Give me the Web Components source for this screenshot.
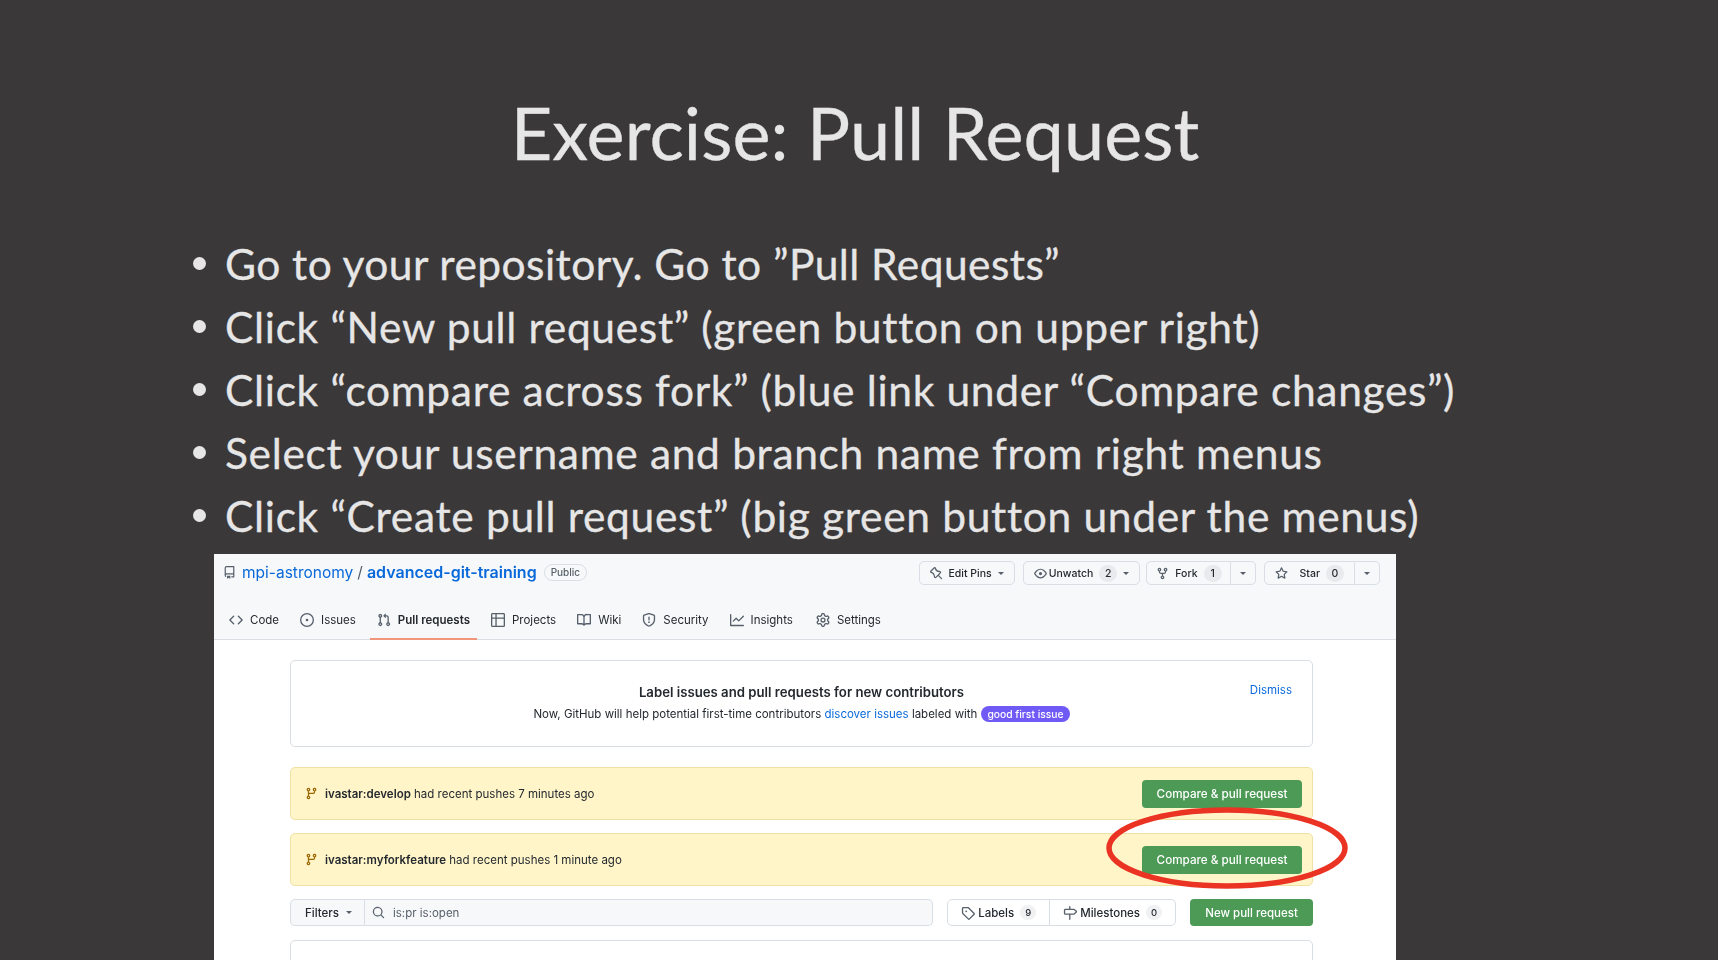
<!DOCTYPE html>
<html lang="en">
<head>
<meta charset="utf-8">
<title>Exercise: Pull Request</title>
<style>
  html, body { margin: 0; height: 100%; background: #3a3839; overflow: hidden; }
</style>
</head>
<body>
<slide-page>
  <slide-title slot="title">Exercise: Pull Request</slide-title>
  <slide-bullet style="letter-spacing:.45px">Go to your repository. Go to ”Pull Requests”</slide-bullet>
  <slide-bullet>Click “New pull request” (green button on upper right)</slide-bullet>
  <slide-bullet>Click “compare across fork” (blue link under “Compare changes”)</slide-bullet>
  <slide-bullet>Select your username and branch name from right menus</slide-bullet>
  <slide-bullet>Click “Create pull request” (big green button under the menus)</slide-bullet>
  <gh-panel slot="shot"></gh-panel>
</slide-page>

<script>
const ICONS = {
  repo: 'M2 2.5A2.5 2.5 0 014.5 0h8.75a.75.75 0 01.75.75v12.5a.75.75 0 01-.75.75h-2.5a.75.75 0 110-1.5h1.75v-2h-8a1 1 0 00-.714 1.7.75.75 0 01-1.072 1.05A2.495 2.495 0 012 11.5v-9zm10.5-1V9h-8c-.356 0-.694.074-1 .208V2.5a1 1 0 011-1h8zM5 12.25v3.25a.25.25 0 00.4.2l1.45-1.087a.25.25 0 01.3 0L8.6 15.7a.25.25 0 00.4-.2v-3.25a.25.25 0 00-.25-.25h-3.5a.25.25 0 00-.25.25z',
  code: 'M4.72 3.22a.75.75 0 011.06 1.06L2.06 8l3.72 3.72a.75.75 0 11-1.06 1.06L.47 8.53a.75.75 0 010-1.06l4.25-4.25zm6.56 0a.75.75 0 10-1.06 1.06L13.94 8l-3.72 3.72a.75.75 0 101.06 1.06l4.25-4.25a.75.75 0 000-1.06l-4.25-4.25z',
  issue: 'M8 9.5a1.5 1.5 0 100-3 1.5 1.5 0 000 3zM8 0a8 8 0 100 16A8 8 0 008 0zM1.5 8a6.5 6.5 0 1113 0 6.5 6.5 0 01-13 0z',
  pr: 'M7.177 3.073L9.573.677A.25.25 0 0110 .854v4.792a.25.25 0 01-.427.177L7.177 3.427a.25.25 0 010-.354zM3.75 2.5a.75.75 0 100 1.5.75.75 0 000-1.5zm-2.25.75a2.25 2.25 0 113 2.122v5.256a2.251 2.251 0 11-1.5 0V5.372A2.25 2.25 0 011.5 3.25zM11 2.5h-1V4h1a1 1 0 011 1v5.628a2.251 2.251 0 101.5 0V5A2.5 2.5 0 0011 2.5zm1 10.25a.75.75 0 111.5 0 .75.75 0 01-1.5 0zM3.75 12a.75.75 0 100 1.5.75.75 0 000-1.5z',
  table: 'M0 1.75C0 .784.784 0 1.75 0h12.5C15.216 0 16 .784 16 1.75v12.5A1.75 1.75 0 0114.25 16H1.75A1.75 1.75 0 010 14.25V1.75zM1.5 6.5v7.75c0 .138.112.25.25.25H5v-8H1.5zM5 5H1.5V1.75a.25.25 0 01.25-.25H5V5zm1.5 1.5v8h7.75a.25.25 0 00.25-.25V6.5h-8zm8-1.5h-8V1.5h7.75a.25.25 0 01.25.25V5z',
  book: 'M0 1.75A.75.75 0 01.75 1h4.253c1.227 0 2.317.59 3 1.501A3.744 3.744 0 0111.006 1h4.245a.75.75 0 01.75.75v10.5a.75.75 0 01-.75.75h-4.507a2.25 2.25 0 00-1.591.659l-.622.621a.75.75 0 01-1.06 0l-.622-.621A2.25 2.25 0 005.258 13H.75a.75.75 0 01-.75-.75V1.75zm8.755 3a2.25 2.25 0 012.25-2.25H14.5v9h-3.757c-.71 0-1.4.201-1.992.572l.004-7.322zm-1.504 7.324l.004-5.073-.002-2.253A2.25 2.25 0 005.003 2.5H1.5v9h3.757a3.75 3.75 0 011.994.574z',
  shield: 'M7.467.133a1.75 1.75 0 011.066 0l5.25 1.68A1.75 1.75 0 0115 3.48V7c0 1.566-.32 3.182-1.303 4.682-.983 1.498-2.585 2.813-5.032 3.855a1.7 1.7 0 01-1.33 0c-2.447-1.042-4.049-2.357-5.032-3.855C1.32 10.182 1 8.566 1 7V3.48a1.75 1.75 0 011.217-1.667l5.25-1.68zm.61 1.429a.25.25 0 00-.153 0l-5.25 1.68a.25.25 0 00-.174.238V7c0 1.358.275 2.666 1.057 3.86.784 1.194 2.121 2.34 4.366 3.297a.2.2 0 00.154 0c2.245-.956 3.582-2.104 4.366-3.298C13.225 9.666 13.5 8.36 13.5 7V3.48a.25.25 0 00-.174-.237l-5.25-1.68zM9 10.5a1 1 0 11-2 0 1 1 0 012 0zm-.25-5.75a.75.75 0 10-1.5 0v3a.75.75 0 001.5 0v-3z',
  graph: 'M1.5 1.75a.75.75 0 00-1.5 0v12.5c0 .414.336.75.75.75h14.5a.75.75 0 000-1.5H1.5V1.75zm14.28 2.53a.75.75 0 00-1.06-1.06L10 7.94 7.53 5.47a.75.75 0 00-1.06 0L3.22 8.72a.75.75 0 001.06 1.06L7 7.06l2.47 2.47a.75.75 0 001.06 0l5.25-5.25z',
  gear: 'M7.429 1.525a6.593 6.593 0 011.142 0c.036.003.108.036.137.146l.289 1.105c.147.56.55.967.997 1.189.174.086.341.183.501.29.417.278.97.423 1.53.27l1.102-.303c.11-.03.175.016.195.046.219.31.41.641.573.989.014.031.022.11-.059.19l-.815.806c-.411.406-.562.957-.53 1.456a4.588 4.588 0 010 .582c-.032.499.119 1.05.53 1.456l.815.806c.08.08.073.159.059.19a6.494 6.494 0 01-.573.99c-.02.029-.086.074-.195.045l-1.103-.303c-.559-.153-1.112-.008-1.529.27-.16.107-.327.204-.5.29-.449.222-.851.628-.998 1.189l-.289 1.105c-.029.11-.101.143-.137.146a6.613 6.613 0 01-1.142 0c-.036-.003-.108-.037-.137-.146l-.289-1.105c-.147-.56-.55-.967-.997-1.189a4.502 4.502 0 01-.501-.29c-.417-.278-.97-.423-1.53-.27l-1.102.303c-.11.03-.175-.016-.195-.046a6.492 6.492 0 01-.573-.989c-.014-.031-.022-.11.059-.19l.815-.806c.411-.406.562-.957.53-1.456a4.587 4.587 0 010-.582c.032-.499-.119-1.05-.53-1.456l-.815-.806c-.08-.08-.073-.159-.059-.19a6.44 6.44 0 01.573-.99c.02-.029.086-.075.195-.045l1.103.303c.559.153 1.112.008 1.529-.27.16-.107.327-.204.5-.29.449-.222.851-.628.998-1.189l.289-1.105c.029-.11.101-.143.137-.146zM8 0c-.236 0-.47.01-.701.03-.743.065-1.29.615-1.458 1.261l-.29 1.106c-.017.066-.078.158-.211.224a5.994 5.994 0 00-.668.386c-.123.082-.233.09-.3.071L3.27 2.776c-.644-.177-1.392.02-1.82.63a7.977 7.977 0 00-.704 1.217c-.315.675-.111 1.422.363 1.891l.815.806c.05.048.098.147.088.294a6.084 6.084 0 000 .772c.01.147-.038.246-.088.294l-.815.806c-.474.469-.678 1.216-.363 1.891.2.428.436.835.704 1.218.428.609 1.176.806 1.82.63l1.103-.303c.066-.019.176-.011.299.071.213.143.436.272.668.386.133.066.194.158.212.224l.289 1.106c.169.646.715 1.196 1.458 1.26a8.094 8.094 0 001.402 0c.743-.064 1.29-.614 1.458-1.26l.29-1.106c.017-.066.078-.158.211-.224a5.98 5.98 0 00.668-.386c.123-.082.233-.09.3-.071l1.102.302c.644.177 1.392-.02 1.82-.63.268-.382.505-.789.704-1.217.315-.675.111-1.422-.364-1.891l-.814-.806c-.05-.048-.098-.147-.088-.294a6.1 6.1 0 000-.772c-.01-.147.039-.246.088-.294l.814-.806c.475-.469.679-1.216.364-1.891a7.992 7.992 0 00-.704-1.218c-.428-.609-1.176-.806-1.82-.63l-1.103.303c-.066.019-.176.011-.299-.071a5.991 5.991 0 00-.668-.386c-.133-.066-.194-.158-.212-.224L10.16 1.29C9.99.645 9.444.095 8.701.031A8.094 8.094 0 008 0zm1.5 8a1.5 1.5 0 11-3 0 1.5 1.5 0 013 0zM11 8a3 3 0 11-6 0 3 3 0 016 0z',
  pin: 'M4.456.734a1.75 1.75 0 012.826.504l.613 1.327a3.081 3.081 0 002.084 1.707l2.454.584c1.332.317 1.8 1.972.832 2.94L11.06 10l3.72 3.72a.75.75 0 11-1.061 1.06L10 11.06l-2.204 2.205c-.968.968-2.623.5-2.94-.832l-.584-2.454a3.081 3.081 0 00-1.707-2.084l-1.327-.613a1.75 1.75 0 01-.504-2.826L4.456.734zM5.92 1.866a.25.25 0 00-.404-.072L1.794 5.516a.25.25 0 00.072.404l1.328.613A4.582 4.582 0 015.73 9.63l.584 2.454a.25.25 0 00.42.12l5.47-5.47a.25.25 0 00-.12-.42L9.63 6.13a4.583 4.583 0 01-3.098-2.537L5.92 1.866z',
  eye: 'M1.679 7.932c.412-.621 1.242-1.75 2.366-2.717C5.175 4.242 6.527 3.5 8 3.5c1.473 0 2.824.742 3.955 1.715 1.124.967 1.954 2.096 2.366 2.717a.119.119 0 010 .136c-.412.621-1.242 1.75-2.366 2.717C10.825 11.758 9.473 12.5 8 12.5c-1.473 0-2.824-.742-3.955-1.715C2.92 9.818 2.09 8.69 1.679 8.068a.119.119 0 010-.136zM8 2c-1.981 0-3.67.992-4.933 2.078C1.797 5.169.88 6.423.43 7.1a1.619 1.619 0 000 1.798c.45.678 1.367 1.932 2.637 3.024C4.329 13.008 6.019 14 8 14c1.981 0 3.67-.992 4.933-2.078 1.27-1.091 2.187-2.345 2.637-3.023a1.619 1.619 0 000-1.798c-.45-.678-1.367-1.932-2.637-3.023C11.671 2.992 9.981 2 8 2zm0 8a2 2 0 100-4 2 2 0 000 4z',
  fork: 'M5 3.25a.75.75 0 11-1.5 0 .75.75 0 011.5 0zm0 2.122a2.25 2.25 0 10-1.5 0v.878A2.25 2.25 0 005.75 8.5h1.5v2.128a2.251 2.251 0 101.5 0V8.5h1.5a2.25 2.25 0 002.25-2.25v-.878a2.25 2.25 0 10-1.5 0v.878a.75.75 0 01-.75.75h-4.5A.75.75 0 015 6.25v-.878zm3.75 7.378a.75.75 0 11-1.5 0 .75.75 0 011.5 0zm3-8.75a.75.75 0 100-1.5.75.75 0 000 1.5z',
  star: 'M8 .25a.75.75 0 01.673.418l1.882 3.815 4.21.612a.75.75 0 01.416 1.279l-3.046 2.97.719 4.192a.75.75 0 01-1.088.791L8 12.347l-3.766 1.98a.75.75 0 01-1.088-.79l.72-4.194L.818 6.374a.75.75 0 01.416-1.28l4.21-.611L7.327.668A.75.75 0 018 .25zm0 2.445L6.615 5.5a.75.75 0 01-.564.41l-3.097.45 2.24 2.184a.75.75 0 01.216.664l-.528 3.084 2.769-1.456a.75.75 0 01.698 0l2.77 1.456-.53-3.084a.75.75 0 01.216-.664l2.24-2.183-3.096-.45a.75.75 0 01-.564-.41L8 2.694v.001z',
  branch: 'M11.75 2.5a.75.75 0 100 1.5.75.75 0 000-1.5zm-2.25.75a2.25 2.25 0 113 2.122V6A2.5 2.5 0 0110 8.5H6a1 1 0 00-1 1v1.128a2.251 2.251 0 11-1.5 0V5.372a2.25 2.25 0 111.5 0v1.836A2.492 2.492 0 016 7h4a1 1 0 001-1v-.628A2.25 2.25 0 019.5 3.25zM4.25 12a.75.75 0 100 1.5.75.75 0 000-1.5zM3.5 3.25a.75.75 0 111.5 0 .75.75 0 01-1.5 0z',
  search: 'M11.5 7a4.499 4.499 0 11-8.998 0A4.499 4.499 0 0111.5 7zm-.82 4.74a6 6 0 111.06-1.06l3.04 3.04a.75.75 0 11-1.06 1.06l-3.04-3.04z',
  tag: 'M2.5 7.775V2.75a.25.25 0 01.25-.25h5.025a.25.25 0 01.177.073l6.25 6.25a.25.25 0 010 .354l-5.025 5.025a.25.25 0 01-.354 0l-6.25-6.25a.25.25 0 01-.073-.177zm-1.5 0V2.75C1 1.784 1.784 1 2.75 1h5.025c.464 0 .91.184 1.238.513l6.25 6.25a1.75 1.75 0 010 2.474l-5.026 5.026a1.75 1.75 0 01-2.474 0l-6.25-6.25A1.75 1.75 0 011 7.775zM6 5a1 1 0 100 2 1 1 0 000-2z',
  milestone: 'M7.75 0a.75.75 0 01.75.75V3h3.634c.414 0 .814.147 1.13.414l2.07 1.75a1.75 1.75 0 010 2.672l-2.07 1.75a1.75 1.75 0 01-1.13.414H8.5v5.25a.75.75 0 11-1.5 0V10H2.75A1.75 1.75 0 011 8.25v-3.5C1 3.784 1.784 3 2.75 3H7V.75A.75.75 0 017.75 0zm0 8.5h4.384a.25.25 0 00.161-.06l2.07-1.75a.25.25 0 000-.38l-2.07-1.75a.25.25 0 00-.161-.06H2.75a.25.25 0 00-.25.25v3.5c0 .138.112.25.25.25h5z'
}

const define = (name, html) => customElements.define(name, class extends HTMLElement {
  constructor () {
    super()
    this.attachShadow({ mode: 'open' }).innerHTML = html
  }
})

/** Inline octicon, picked by its name attribute. */
customElements.define('gh-icon', class extends HTMLElement {
  constructor () {
    super()
    const size = this.getAttribute('size') || 14
    this.attachShadow({ mode: 'open' }).innerHTML = `
      <style>:host { display: inline-flex; flex: none; color: #57606a; }</style>
      <svg width="${size}" height="${size}" viewBox="0 0 16 16" fill="currentColor">
        <path fill-rule="evenodd" d="${ICONS[this.getAttribute('name')]}"/>
      </svg>`
  }
})

define('slide-page', `
  <style>
    :host {
      display: flex; flex-direction: column; height: 960px; overflow: hidden;
      background: #3a3839; color: #e7e6e6;
      font-family: Lato, "Open Sans", sans-serif;
      -webkit-text-stroke: 0.3px #e7e6e6;
    }
    .bullets { display: flex; flex-direction: column; padding: 0 0 0 193px; margin-top: 54px; }
    .shot { display: block; padding: 0 322px 0 214px; margin-top: 7px; -webkit-text-stroke: 0; }
  </style>
  <slot name="title"></slot>
  <div class="bullets"><slot></slot></div>
  <div class="shot"><slot name="shot"></slot></div>`)

define('slide-title', `
  <style>
    :host { display: block; padding: 86px 8px 0 0; text-align: center; font-size: 72px; line-height: 92px; letter-spacing: 0.05px; }
  </style>
  <slot></slot>`)

define('slide-bullet', `
  <style>
    :host { display: flex; align-items: center; height: 63px; font-size: 42.5px; letter-spacing: 0.67px; white-space: nowrap; }
    i { width: 13px; height: 13px; border-radius: 50%; background: currentColor; margin-right: 19px; flex: none; }
  </style>
  <i></i><span><slot></slot></span>`)

/* header button, with optional counter and caret in its slot */
define('gh-btn', `
  <style>
    :host {
      display: inline-flex; align-items: center; gap: 6px; height: 24px; box-sizing: border-box;
      padding: 0 10px; border: 1px solid #d8dee4; border-radius: 5px; background: #f6f8fa;
      font-size: 10.5px; font-weight: 500; color: #24292f; white-space: nowrap;
    }
  </style>
  <slot></slot>`)

define('gh-count', `
  <style>
    :host { display: inline-block; min-width: 18px; padding: 0 1px; box-sizing: border-box; line-height: 17px; border-radius: 9px; text-align: center; background: #e8eaed; font-size: 10.5px; color: #24292f; }
  </style>
  <slot></slot>`)

define('gh-caret', `
  <style>:host { display: inline-block; width: 0; height: 0; border: 3.5px solid transparent; border-top-color: #57606a; border-bottom: 0; }</style>`)

define('gh-tab', `
  <style>
    :host { display: inline-flex; align-items: center; gap: 7px; padding: 0 7px; height: 100%; box-sizing: border-box; font-size: 11.5px; color: #24292f; border-bottom: 2px solid transparent; }
    :host([active]) { font-weight: 600; border-bottom-color: #f0967a; }
  </style>
  <slot></slot>`)

define('gh-push', `
  <style>
    :host {
      display: flex; align-items: center; height: 53px; box-sizing: border-box; padding: 0 10px 0 14px;
      background: #fff5c9; border: 1px solid #efe1a4; border-radius: 5px; font-size: 11.5px; color: #24292f;
    }
    gh-icon { color: #9a6700; margin-right: 7px; }
    .msg { flex: 1; }
    b { font-weight: 600; }
    .go { display: inline-flex; align-items: center; justify-content: center; width: 160px; height: 28px; border-radius: 4px; background: #4c9a55; color: #fff; font-size: 11.7px; font-weight: 500; }
  </style>
  <gh-icon name="branch" size="13"></gh-icon>
  <span class="msg"><slot></slot></span>
  <span class="go">Compare &amp; pull request</span>`)

define('gh-banner', `
  <style>
    :host {
      display: flex; flex-direction: column; align-items: center; height: 87px; box-sizing: border-box; padding-top: 21px;
      position: relative; background: #fff; border: 1px solid #d8dee4; border-radius: 5px; font-size: 11.5px; color: #24292f;
    }
    h2 { margin: 0 0 3px; font-size: 13.2px; line-height: 20px; font-weight: 600; }
    p { margin: 0; display: flex; align-items: center; gap: 4px; line-height: 18px; }
    a { color: #0969da; text-decoration: none; }
    .label { background: #6f5af6; color: #fff; border-radius: 9px; padding: 0 6px; font-size: 10.3px; line-height: 16px; font-weight: 500; }
    .dismiss { position: absolute; right: 20px; top: 22px; }
  </style>
  <h2>Label issues and pull requests for new contributors</h2>
  <p><span>Now, GitHub will help potential first-time contributors <a>discover issues</a> labeled with</span><span class="label">good first issue</span></p>
  <a class="dismiss">Dismiss</a>`)

define('gh-toolbar', `
  <style>
    :host { display: flex; align-items: stretch; height: 27px; font-size: 11.5px; color: #24292f; }
    .filters { display: flex; align-items: center; gap: 7px; width: 75px; box-sizing: border-box; padding-left: 14px; background: #f6f8fa; border: 1px solid #d8dee4; border-radius: 5px 0 0 5px; font-weight: 500; }
    .search { display: flex; align-items: center; gap: 8px; flex: 1; padding-left: 7px; background: #f6f8fa; border: 1px solid #d8dee4; border-left: 0; border-radius: 0 5px 5px 0; color: #57606a; }
    .nav { display: flex; margin-left: 14px; border: 1px solid #d8dee4; border-radius: 5px; font-weight: 500; }
    .nav span { display: flex; align-items: center; gap: 3px; padding: 0 13px; }
    .nav span + span { border-left: 1px solid #d8dee4; }
    .new { display: flex; align-items: center; justify-content: center; width: 123px; margin-left: 14px; background: #4c9a55; color: #fff; font-weight: 500; border-radius: 4px; }
    gh-count { background: #f0f1f3; font-size: 9.5px; margin-left: 3px; min-width: 16px; line-height: 15px; }
  </style>
  <div class="filters">Filters <gh-caret></gh-caret></div>
  <div class="search"><gh-icon name="search" size="13"></gh-icon><span>is:pr is:open</span></div>
  <div class="nav">
    <span><gh-icon name="tag" size="14"></gh-icon>Labels <gh-count>9</gh-count></span>
    <span><gh-icon name="milestone" size="14"></gh-icon>Milestones <gh-count>0</gh-count></span>
  </div>
  <div class="new">New pull request</div>`)

define('gh-panel', `
  <style>
    :host { display: block; position: relative; width: 1182px; height: 410px; overflow: hidden; background: #fff; font-family: Inter, "Liberation Sans", sans-serif; filter: blur(0.4px); }
    header { background: #f6f8fa; height: 86px; box-sizing: border-box; border-bottom: 1px solid #d8dee4; display: flex; flex-direction: column; }
    .top { display: flex; align-items: center; height: 38px; padding: 0 16px 0 9px; }
    .repo { display: flex; align-items: center; gap: 6px; flex: 1; margin-top: -2px; font-size: 15.5px; color: #0969da; }
    .repo strong { font-weight: 600; font-size: 16px; }
    .repo i { font-style: normal; color: #57606a; margin: 0 -2px; }
    .pub { font-size: 10px; font-weight: 500; color: #57606a; border: 1px solid #d8dee4; border-radius: 9px; padding: 0 6px; line-height: 15px; margin-left: 1px; }
    .btns { display: flex; }
    .split { display: flex; }
    .split gh-btn:first-child { border-radius: 5px 0 0 5px; }
    .split gh-btn:last-child { border-radius: 0 5px 5px 0; border-left: 0; padding: 0 9px; }
    .watch { margin-left: 8px; }
    .fork { margin-left: 6px; }
    .fork gh-btn:first-child { padding: 0 8px 0 9px; }
    .star { margin-left: 8px; }
    .eye { margin-right: -4px; }
    .star gh-icon { margin-right: 6px; }
    nav { display: flex; gap: 7px; padding-left: 8px; flex: 1; align-items: stretch; margin-bottom: -1px; padding-top: 9px; }
    .last { margin-left: 2px; }
    main { display: flex; flex-direction: column; padding: 20px 83px 0 76px; }
    gh-banner { margin-bottom: 20px; }
    gh-push { margin-bottom: 13px; }
    gh-toolbar { margin-bottom: 14px; }
    .list { height: 60px; border: 1px solid #d8dee4; border-radius: 5px 5px 0 0; }
    b { font-weight: 600; }
    .ring { position: absolute; left: 887px; top: 249px; }
  </style>
  <header>
    <div class="top">
      <div class="repo"><gh-icon name="repo" size="13"></gh-icon><span>mpi-astronomy</span><i>/</i><strong>advanced-git-training</strong><span class="pub">Public</span></div>
      <div class="btns">
        <gh-btn><gh-icon name="pin" size="13"></gh-icon>Edit Pins <gh-caret></gh-caret></gh-btn>
        <gh-btn class="watch"><gh-icon class="eye" name="eye" size="13"></gh-icon>Unwatch <gh-count>2</gh-count><gh-caret></gh-caret></gh-btn>
        <div class="split fork">
          <gh-btn><gh-icon name="fork" size="13"></gh-icon>Fork <gh-count>1</gh-count></gh-btn>
          <gh-btn><gh-caret></gh-caret></gh-btn>
        </div>
        <div class="split star">
          <gh-btn><gh-icon name="star" size="13"></gh-icon>Star <gh-count>0</gh-count></gh-btn>
          <gh-btn><gh-caret></gh-caret></gh-btn>
        </div>
      </div>
    </div>
    <nav>
      <gh-tab><gh-icon name="code"></gh-icon>Code</gh-tab>
      <gh-tab><gh-icon name="issue"></gh-icon>Issues</gh-tab>
      <gh-tab active><gh-icon name="pr"></gh-icon>Pull requests</gh-tab>
      <gh-tab><gh-icon name="table"></gh-icon>Projects</gh-tab>
      <gh-tab><gh-icon name="book"></gh-icon>Wiki</gh-tab>
      <gh-tab><gh-icon name="shield"></gh-icon>Security</gh-tab>
      <gh-tab><gh-icon name="graph"></gh-icon>Insights</gh-tab>
      <gh-tab class="last"><gh-icon name="gear"></gh-icon>Settings</gh-tab>
    </nav>
  </header>
  <main>
    <gh-banner></gh-banner>
    <gh-push><b>ivastar:develop</b> had recent pushes 7 minutes ago</gh-push>
    <gh-push><b>ivastar:myforkfeature</b> had recent pushes 1 minute ago</gh-push>
    <gh-toolbar></gh-toolbar>
    <div class="list"></div>
  </main>
  <svg class="ring" width="250" height="90" viewBox="0 0 250 90">
    <ellipse cx="126" cy="45" rx="118" ry="38" fill="none" stroke="#ea3323" stroke-width="5.5"/>
  </svg>`)
</script>
</body>
</html>
